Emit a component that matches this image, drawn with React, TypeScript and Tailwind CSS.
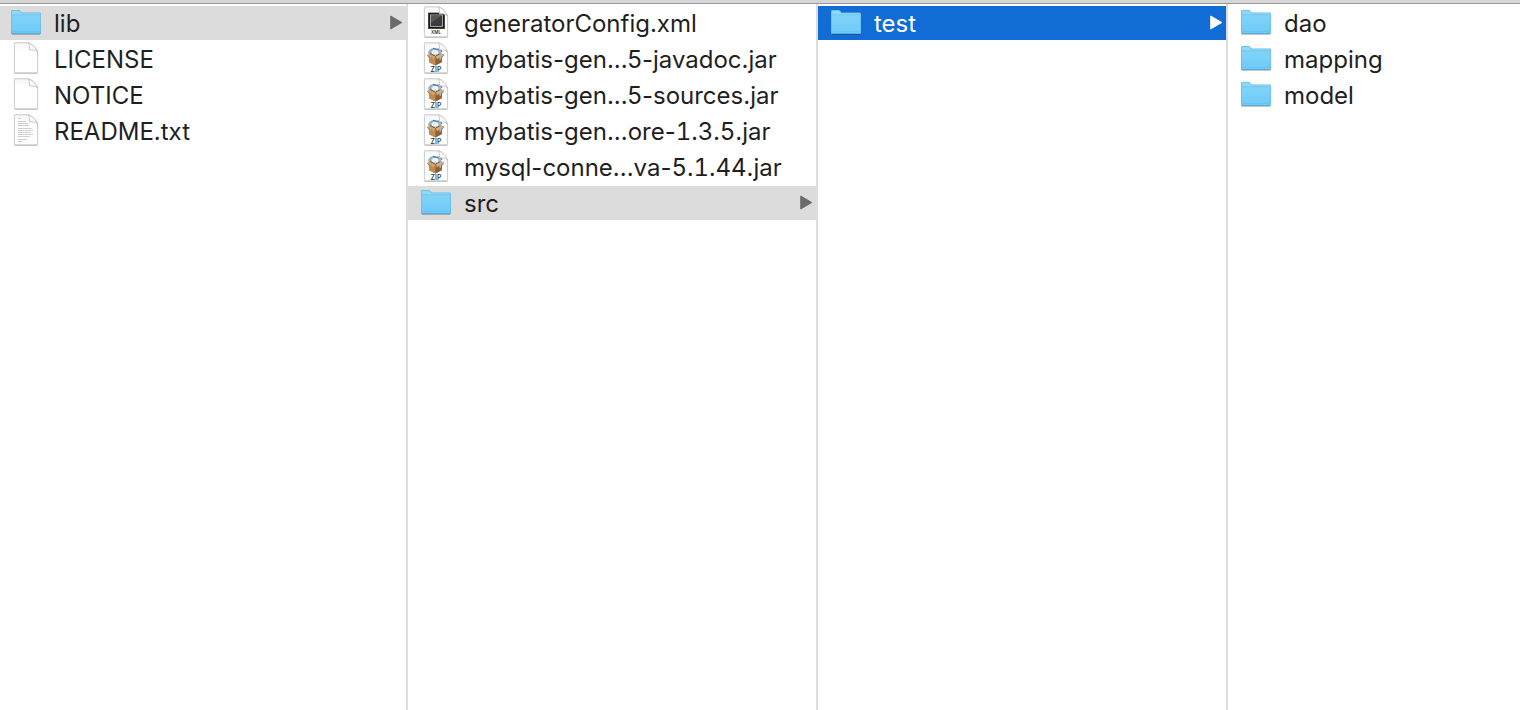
import { useState } from "react";

type Kind = "folder" | "blank" | "text" | "xml" | "zip";
type Entry = { name: string; kind: Kind; open?: boolean };
type Column = { label: string; entries: Entry[] };

const columns: Column[] = [
  {
    label: "root",
    entries: [
      { name: "lib", kind: "folder", open: true },
      { name: "LICENSE", kind: "blank" },
      { name: "NOTICE", kind: "blank" },
      { name: "README.txt", kind: "text" },
    ],
  },
  {
    label: "lib",
    entries: [
      { name: "generatorConfig.xml", kind: "xml" },
      { name: "mybatis-gen...5-javadoc.jar", kind: "zip" },
      { name: "mybatis-gen...5-sources.jar", kind: "zip" },
      { name: "mybatis-gen...ore-1.3.5.jar", kind: "zip" },
      { name: "mysql-conne...va-5.1.44.jar", kind: "zip" },
      { name: "src", kind: "folder", open: true },
    ],
  },
  { label: "src", entries: [{ name: "test", kind: "folder", open: true }] },
  {
    label: "test",
    entries: [
      { name: "dao", kind: "folder" },
      { name: "mapping", kind: "folder" },
      { name: "model", kind: "folder" },
    ],
  },
];

function FolderIcon() {
  return (
    <svg viewBox="0 0 30 34" className="h-[34px] w-[30px] shrink-0" aria-hidden="true">
      <defs>
        <linearGradient id="folder-front" x1="0" y1="0" x2="0" y2="1">
          <stop offset="0" stopColor="#82d4f8" />
          <stop offset="1" stopColor="#6ccaf8" />
        </linearGradient>
      </defs>
      <path d="M1 28.500h28" stroke="#000" strokeOpacity=".22" />
      <path d="M0 5.400Q0 4 1.400 4H8c1.600 0 1.600 2.600 3.400 2.600h17.200Q30 6.600 30 8v19q0 1-1 1H1q-1 0-1-1z" fill="#67b8df" />
      <path d="M.7 5.600q0-.9.9-.9h6.200c1.400 0 1.600 2.600 3.400 2.600h17.200q.9 0 .9.9V9H.7z" fill="#8cdafa" />
      <path d="M.6 9h28.800v17.800q0 .6-.6.6H1.200q-.6 0-.6-.6z" fill="url(#folder-front)" />
      <path d="M.6 8.800h28.800" stroke="#6cc1e8" strokeWidth=".8" />
      <path d="M.6 25.500h28.800" stroke="#65c0ee" strokeWidth=".7" />
      <path d="M.3 27.600h29.400" stroke="#57a5cd" strokeWidth=".8" />
    </svg>
  );
}

function XmlArt() {
  return (
    <>
      <rect x="7" y="6.500" width="17" height="16.500" fill="#5a5a5a" />
      <rect x="7.700" y="7.200" width="15.600" height="15.100" fill="#191919" />
      <rect x="9.500" y="9" width="12" height="11.500" fill="#3b3b3b" stroke="#c4c4c4" strokeWidth=".8" />
      <path d="M10 9.500h11L10 17z" fill="#565656" />
      <text x="15" y="28" textAnchor="middle" fontSize="4.500" fontWeight="600" fill="#333" fontFamily="Inter, sans-serif">
        XML
      </text>
    </>
  );
}

function ZipArt() {
  return (
    <>
      <path d="M7 11c.5-3.500 4-5.500 8-4.800 3 .3 4.500 2 5.500 4.800l-3 2H9z" fill="#8fb2cb" />
      <path d="M10.500 9.500c2-2.300 5-2.300 7 0l-.5 3h-6z" fill="#edf3f6" />
      <path d="M12 6.300l3.500 1.200 3.500-.7 2 3" stroke="#4c7d9f" strokeWidth="1.200" fill="none" />
      <path d="M6 13.500l3-2 5.500 2.200 5.500-2.500 3.500 1.800-2.500 2.700V20l-6.500 3.500L8 20.300V16z" fill="#ab7a44" />
      <path d="M8 15.500l6.500 2.300v5.700L8 20.300z" fill="#bd8d55" />
      <path d="M14.500 17.800l6.500-2.300V20l-6.500 3.500z" fill="#925f30" />
      <path d="M6 13.500l3-2 5.500 2.700-1.500 3.200z" fill="#cfa470" />
      <path d="M14.500 14.200L20 11.200l3.500 1.800-7 3.800z" fill="#d4ae7b" />
      <path d="M9 11.500l5.500 2.700 5.500-3" stroke="#6e4823" strokeWidth=".8" fill="none" />
      <path d="M17.500 9l2.500 4-1 5" stroke="#a9b7c0" strokeWidth="1.300" fill="none" />
      <text x="15" y="29.500" textAnchor="middle" fontSize="7" fontWeight="500" fill="#333" fontFamily="Inter, sans-serif">
        ZIP
      </text>
    </>
  );
}

function TextArt() {
  return (
    <path
      d="M7 4.500h3M7 7.500h8M7 9.500h10M7 11.500h11M7 14.500h14M7 16.500h15M7 18.500h13M7 20.500h15M7 22.500h12M7 25.500h9M7 27.500h5"
      stroke="#cbcbcb"
      strokeWidth="1.200"
      strokeDasharray="4 .4 2 .3"
      fill="none"
    />
  );
}

function DocumentIcon({ kind }: { kind: Kind }) {
  return (
    <svg viewBox="0 0 30 34" className="h-[34px] w-[30px] shrink-0" aria-hidden="true">
      <defs>
        <linearGradient id="paper" x1="0" y1="0" x2="0" y2="1">
          <stop offset="0" stopColor="#f6f6f6" />
          <stop offset=".25" stopColor="#fff" />
        </linearGradient>
      </defs>
      <path d="M3.500 31.300h23" stroke="#000" strokeOpacity=".28" />
      <path d="M4 .8h13.500c4 1.500 8 5.500 9.100 9.200v20.200q0 .6-.6.6H4q-.6 0-.6-.6V1.400q0-.6.6-.6z" fill="url(#paper)" stroke="#c4c4c4" strokeWidth=".9" />
      {kind === "text" && <TextArt />}
      {kind === "xml" && <XmlArt />}
      {kind === "zip" && <ZipArt />}
      <path d="M17.500.8c1 2 1 4.500.8 7.200 2.700-.4 6.500 0 8.300 2C25 5.500 21.500 2.200 17.500.8z" fill="#fafafa" stroke="#bcbcbc" strokeWidth=".8" />
    </svg>
  );
}

function Arrow() {
  return (
    <svg viewBox="0 0 12 16" className="h-4 w-3 shrink-0" aria-hidden="true">
      <path d="M.8 1.300L11.400 7.500.8 13.700z" fill="currentColor" stroke="currentColor" strokeWidth="1.200" strokeLinejoin="round" />
    </svg>
  );
}

/** File name with its version number set in figures of equal width. */
function FileName({ name }: { name: string }) {
  return name.split(/(\d+(?:\.\d+)+)/).map((part, i) =>
    i % 2 === 1 ? (
      <span key={i} className="tabular-nums">
        {part}
      </span>
    ) : (
      part
    ),
  );
}

export default function App() {
  const [active, setActive] = useState("2/test");

  return (
    <main className="flex min-h-screen flex-col bg-white font-[Inter,'Liberation_Sans',sans-serif] text-[#1f1f1f]">
      <div className="h-1 border-b border-[#989898] bg-[#d6d6d6]" />
      <div className="grid grow grid-cols-[408fr_410fr_410fr_292fr]">
        {columns.map((column, index) => (
          <ul
            key={column.label}
            aria-label={column.label}
            className="flex min-w-0 flex-col gap-0.5 border-r-2 border-[#dcdcdc] pt-0.5 last:border-r-0"
          >
            {column.entries.map((entry) => {
              const id = `${index}/${entry.name}`;
              const tone =
                active === id ? "bg-[#116cd6] text-white" : entry.open ? "bg-[#dcdcdc]" : "";
              const arrowTone = active === id ? "text-white" : "text-[#6b6b6b]";
              return (
                <li key={id}>
                  <button
                    type="button"
                    onClick={() => setActive(id)}
                    className={`flex h-[34px] w-full items-center pr-1 text-left text-2xl ${index === 0 ? "pl-[11px]" : "pl-[13px]"} ${tone}`}
                  >
                    {entry.kind === "folder" ? <FolderIcon /> : <DocumentIcon kind={entry.kind} />}
                    <span className="min-w-0 grow truncate pt-0.5 pl-[13px]">
                      <FileName name={entry.name} />
                    </span>
                    {entry.open && (
                      <span className={`flex ${arrowTone}`}>
                        <Arrow />
                      </span>
                    )}
                  </button>
                </li>
              );
            })}
          </ul>
        ))}
      </div>
    </main>
  );
}
